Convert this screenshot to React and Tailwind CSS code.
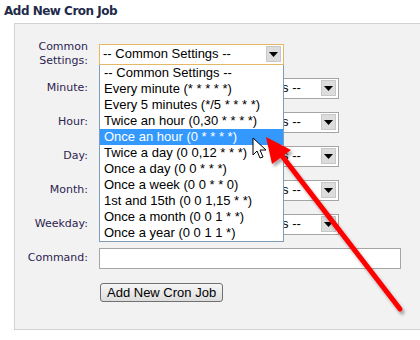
import React from 'react';

const options = [
  '-- Common Settings --',
  'Every minute (* * * * *)',
  'Every 5 minutes (*/5 * * * *)',
  'Twice an hour (0,30 * * * *)',
  'Once an hour (0 * * * *)',
  'Twice a day (0 0,12 * * *)',
  'Once a day (0 0 * * *)',
  'Once a week (0 0 * * 0)',
  '1st and 15th (0 0 1,15 * *)',
  'Once a month (0 0 1 * *)',
  'Once a year (0 0 1 1 *)',
];

const Arrow = () => (
  <span className="flex items-center justify-center w-[15px] h-[16px] bg-[#dcdcdc] border border-[#c8c8c8]">
    <svg width="9" height="5" viewBox="0 0 9 5">
      <path d="M0 0h9L4.5 5z" fill="#000" />
    </svg>
  </span>
);

// fake select box
const Select = ({ focused, width }) => (
  <div
    className={`${width} h-[21px] flex items-center justify-between bg-white pl-[3px] pr-[2px] border ${
      focused ? 'border-[#e3b866]' : 'border-[#a5a5a5]'
    }`}
  >
    <span className="text-[13px] text-black whitespace-nowrap">-- Common Settings --</span>
    <Arrow />
  </div>
);

// text field + common settings select, as in the cron form
const Field = () => (
  <div className="flex items-center gap-[4px]">
    <div className="w-[66px] h-[21px] bg-white border border-[#a5a5a5]" />
    <Select width="w-[170px]" />
  </div>
);

const Row = ({ label, children }) => (
  <div className="flex items-center h-[34px]">
    <div className="w-[73px] text-right text-[11px] leading-[14px] text-[#2d2450] [font-family:'DejaVu_Sans',sans-serif]">
      {label}
    </div>
    <div className="ml-[11px] relative">{children}</div>
  </div>
);

export default function App() {
  return (
    <div className="relative w-[420px] h-[340px] bg-white overflow-hidden [font-family:'Liberation_Sans',Arial,sans-serif]">
      <h2 className="h-[23px] pl-[4px] pt-[3px] text-[12px] leading-[16px] font-bold tracking-[-0.5px] text-[#1f2b4a] [font-family:'DejaVu_Sans',sans-serif]">
        Add New Cron Job
      </h2>

      <div className="ml-[14px] w-[430px] border border-[#d2d2d2] bg-[#f2f2f2] pt-[13px] pb-[20px]">
        <Row
          label={
            <>
              Common
              <br />
              Settings:
            </>
          }
        >
          <Select focused width="w-[185px]" />
          {/* open dropdown list */}
          <ul className="absolute left-0 top-[21px] z-10 w-[185px] bg-white border border-[#7f9db9] border-t-0 text-[13px] leading-[16px] text-black">
            {options.map((o) => (
              <li
                key={o}
                className={`h-[16px] pl-[4px] whitespace-nowrap ${
                  o.startsWith('Once an hour') ? 'bg-[#3399ff] text-white' : ''
                }`}
              >
                {o}
              </li>
            ))}
          </ul>
        </Row>
        <Row label="Minute:">
          <Field />
        </Row>
        <Row label="Hour:">
          <Field />
        </Row>
        <Row label="Day:">
          <Field />
        </Row>
        <Row label="Month:">
          <Field />
        </Row>
        <Row label="Weekday:">
          <Field />
        </Row>
        <Row label="Command:">
          <div className="w-[302px] h-[21px] bg-white border border-[#a5a5a5]" />
        </Row>
        <Row label="">
          <button className="h-[19px] px-[6px] ml-[1px] rounded-[3px] border border-[#707070] bg-gradient-to-b from-[#f6f6f6] to-[#dddddd] text-[13px] leading-[15px] text-black">
            Add New Cron Job
          </button>
        </Row>
      </div>

      {/* annotation: red arrow + mouse cursor */}
      <svg className="absolute inset-0 z-20 pointer-events-none" width="420" height="340" viewBox="0 0 420 340">
        <defs>
          <filter id="sh" x="-20%" y="-20%" width="140%" height="140%">
            <feDropShadow dx="2" dy="3" stdDeviation="1.5" floodColor="#000" floodOpacity="0.35" />
          </filter>
        </defs>
        <g filter="url(#sh)">
          <line x1="400" y1="309" x2="279" y2="152" stroke="#ff0000" strokeWidth="5" strokeLinecap="round" />
          <path d="M266 137 L291 150 L272 164 Z" fill="#ff0000" />
        </g>
        <path
          d="M253 138 V155 L257 151 L260 158 L263 157 L260 150 L266 150 Z"
          fill="#fff"
          stroke="#000"
          strokeWidth="1"
          strokeLinejoin="round"
        />
      </svg>
    </div>
  );
}
